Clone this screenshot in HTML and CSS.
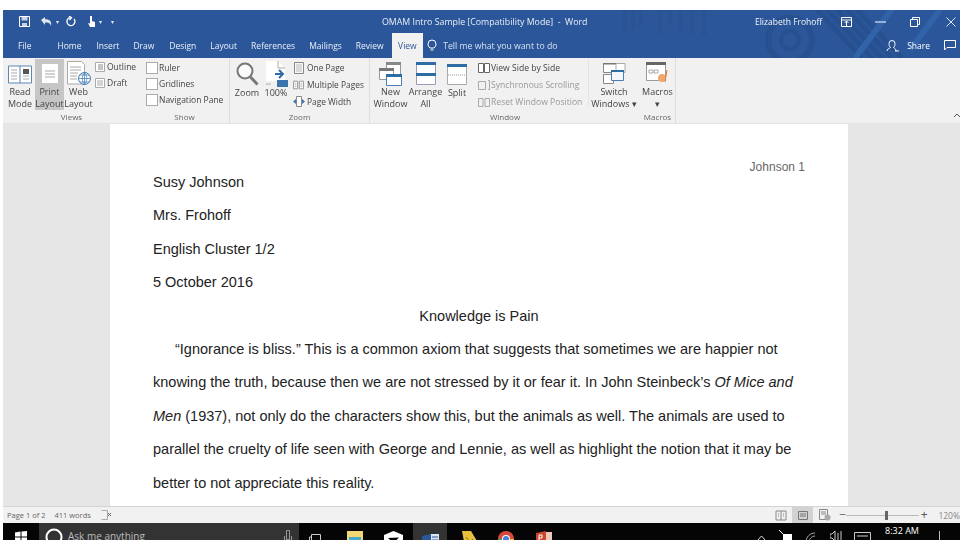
FILE: index.html
```html
<!DOCTYPE html>
<html lang="en">
<head>
<meta charset="utf-8">
<title>OMAM Intro Sample - Word</title>
<link rel="stylesheet" href="styles.css">
</head>
<body>
<div class="screen">
  <header class="chrome">
    <svg class="pattern" width="337" height="48" viewBox="0 0 337 48" fill="none" stroke="#295392">
      <path d="M5 0v24M13 0v20M21 0v16M40 0v24M50 0v14M61 0v20M72 0v24M84 0v26" stroke-width="4"/>
      <circle cx="170" cy="30" r="22" stroke="#26508f" stroke-width="6"/>
      <circle cx="170" cy="30" r="9" stroke="#26508f" stroke-width="4"/>
      <path d="M190 -8l52 56M200 -8l52 56M210 -8l52 56M220 -8l52 56M230 -8l52 56" stroke="#26508f" stroke-width="5"/>
      <path d="M275 -5l-40 53M320 0l-30 40" stroke="#3163a8" stroke-width="6"/>
    </svg>
    <div class="titlebar">
      <div class="qat">
        <svg width="11" height="11" viewBox="0 0 11 11"><path d="M.5.5h10v10H.5z" fill="none" stroke="#fff"/><path d="M2.5 .5h6v4h-6zM3 7h5v3.5H3z" fill="#fff" fill-opacity=".75"/></svg>
        <svg class="q-undo" width="13" height="11" viewBox="0 0 13 11"><path d="M1 4l4-3v2.2c4 0 7 1.300 6 6.800-1-3-3-3.400-6-3.400V9z" fill="#fff" fill-opacity=".85"/></svg>
        <span class="q-caret">▾</span>
        <svg class="q-redo" width="11" height="11" viewBox="0 0 11 11"><path d="M8 3a4 4 0 1 1-4-1.300M3 0l2.500 1.700L3.500 4" fill="none" stroke="#fff" stroke-width="1.300"/></svg>
        <svg class="q-touch" width="9" height="13" viewBox="0 0 9 13"><path d="M3 1h2v5l3 1v5H3L1 8l2 .5z" fill="#fff"/></svg>
        <span class="q-caret">▾</span>
        <span class="q-caret q-last">▾</span>
      </div>
      <div class="doc-title">OMAM Intro Sample [Compatibility Mode]&nbsp; - &nbsp;Word</div>
      <div class="user">Elizabeth Frohoff</div>
      <svg class="w-opt" width="11" height="10" viewBox="0 0 11 10"><path d="M.5.5h10v9H.5zM.5 3h10M5.500 9V4M3.500 6l2-2 2 2" fill="none" stroke="#fff"/></svg>
      <svg class="w-min" width="11" height="2" viewBox="0 0 11 2"><path d="M0 1h11" stroke="#fff"/></svg>
      <svg class="w-max" width="10" height="10" viewBox="0 0 10 10"><path d="M.5 2.500h7v7h-7zM2.500 2.500v-2h7v7h-2" fill="none" stroke="#fff"/></svg>
      <svg class="w-close" width="10" height="10" viewBox="0 0 10 10"><path d="M.5.5l9 9M9.500.5l-9 9" stroke="#dfe6f2"/></svg>
    </div>
    <nav class="tabs">
      <span class="tab t-file">File</span>
      <span class="tab t-home">Home</span>
      <span class="tab">Insert</span>
      <span class="tab t-draw">Draw</span>
      <span class="tab">Design</span>
      <span class="tab">Layout</span>
      <span class="tab">References</span>
      <span class="tab">Mailings</span>
      <span class="tab">Review</span>
      <span class="tab active">View</span>
      <svg class="bulb" width="10" height="13" viewBox="0 0 10 13"><path d="M3 9C1.500 7.500 1 6.500 1 5a4 4 0 0 1 8 0c0 1.500-.5 2.500-2 4zM3.500 11h3" fill="none" stroke="#fff"/></svg>
      <span class="tell">Tell me what you want to do</span>
      <svg class="share-ic" width="13" height="12" viewBox="0 0 13 12"><path d="M1 11c0-2 2-2.500 3.500-3.500C3 6 3 4.500 3 3.500a3 3 0 0 1 6 0c0 1 0 2.500-1.500 4C9 8.500 10 9 10 11M9 11h4" fill="none" stroke="#fff"/></svg>
      <span class="share">Share</span>
      <svg class="comment" width="12" height="11" viewBox="0 0 12 11"><path d="M.5.5h11v7H3L.5 10z" fill="none" stroke="#fff"/></svg>
    </nav>
  </header>

  <section class="ribbon">
    <div class="group g-views">
      <div class="group-body">
        <div class="big b-read"><div class="big-icon"><svg width="24" height="20" viewBox="0 0 24 20"><path d="M.5 2h23v17H.5z" fill="#fff" stroke="#5b87b5"/><path d="M12 2v17" stroke="#5b87b5"/><path d="M3 6h6M3 9h6M3 12h6M3 15h6M15 12h6M15 15h6" stroke="#aaa"/><path d="M15 5h6v5h-6z" fill="#555"/></svg></div><span>Read<br>Mode</span></div>
        <div class="big b-print selected"><div class="big-icon"><svg width="16" height="19" viewBox="0 0 16 19"><path d="M0 0h16v19H0z" fill="#fff"/><path d="M3 7h10M3 10h10M3 13h10" stroke="#aaa"/></svg></div><span>Print<br>Layout</span></div>
        <div class="big b-web"><div class="big-icon"><svg width="24" height="25" viewBox="0 0 24 25"><path d="M.5.5h14l3 3V23H.5z" fill="#fff" stroke="#aaa"/><path d="M3 6h11M3 9h11M3 12h8M3 15h7M3 18h7" stroke="#aaa"/><circle cx="17.500" cy="17.500" r="6" fill="#fff" stroke="#3b77b0"/><path d="M11.500 17.500h12M17.500 11.500v12M13 14h9M13 21h9M17.500 11.500c-3 3-3 9 0 12M17.500 11.500c3 3 3 9 0 12" fill="none" stroke="#3b77b0" stroke-width=".7"/></svg></div><span>Web<br>Layout</span></div>
        <div class="small-list l-views">
          <div class="row"><svg class="ic" width="10" height="10" viewBox="0 0 10 10"><path d="M.5.5h9v9h-9z" fill="#fff" stroke="#aaa"/><path d="M3 3h5M3 5h5M3 7h5" stroke="#888"/></svg>Outline</div>
          <div class="row"><svg class="ic" width="10" height="10" viewBox="0 0 10 10"><path d="M.5.5h9v9h-9z" fill="#fff" stroke="#aaa"/><path d="M2 3h6M2 5h6M2 7h6" stroke="#aaa"/></svg>Draft</div>
        </div>
      </div>
      <div class="group-label">Views</div>
    </div>

    <div class="group g-show sep">
      <div class="group-body">
        <div class="small-list l-show">
          <div class="row"><span class="check"></span>Ruler</div>
          <div class="row"><span class="check"></span>Gridlines</div>
          <div class="row"><span class="check"></span>Navigation Pane</div>
        </div>
      </div>
      <div class="group-label">Show</div>
    </div>

    <div class="group g-zoom sep">
      <div class="group-body">
        <div class="big b-zoom"><div class="big-icon"><svg width="23" height="24" viewBox="0 0 23 24"><circle cx="9" cy="9" r="7.500" fill="#fafafa" stroke="#777" stroke-width="2"/><path d="M14.500 15l7 7.500" stroke="#777" stroke-width="3"/></svg></div><span>Zoom</span></div>
        <div class="big b-100"><div class="big-icon"><svg width="23" height="27" viewBox="0 0 23 27"><path d="M1 0h12l7 7v13H1z" fill="#fff"/><path d="M13 0v7h7" fill="none" stroke="#aaa"/><path d="M10 13h7M14 9l4 4-4 4" fill="none" stroke="#2b6ca8" stroke-width="2"/><path d="M1 23h5" stroke="#aaa"/><path d="M12 19h11v7H12z" fill="#3c75ab"/></svg></div><span>100%</span></div>
        <div class="small-list l-zoom">
          <div class="row"><svg class="ic-z z-one" width="10" height="12" viewBox="0 0 10 12"><path d="M.5.5h9v11h-9z" fill="#f8f8f8" stroke="#888"/><path d="M2 3h6M2 5h6M2 7h6M2 9h6" stroke="#bbb"/></svg>One Page</div>
          <div class="row"><svg class="ic-z" width="11" height="10" viewBox="0 0 13 10"><path d="M.5.5h5v9h-5zM7.500.5h5v9h-5z" fill="#fff" stroke="#888"/><path d="M2 3h2M2 5h2M2 7h2M9 3h2M9 5h2M9 7h2" stroke="#aaa"/></svg>Multiple Pages</div>
          <div class="row"><svg class="ic-z ic-pw" width="12" height="11" viewBox="0 0 12 11"><path d="M3.500.5h5v10h-5z" fill="#fff" stroke="#888"/><path d="M3 3L0 5.500 3 8zM9 3l3 2.500L9 8z" fill="#3b77b0"/></svg>Page Width</div>
        </div>
      </div>
      <div class="group-label">Zoom</div>
    </div>

    <div class="group g-window">
      <div class="group-body">
        <div class="big b-new"><div class="big-icon"><svg width="23" height="24" viewBox="0 0 23 24"><path d="M7.500.5h14v13h-14z" fill="#fff" stroke="#999"/><path d="M7 0h15v3H7z" fill="#888"/><path d="M.5 6.500h14v11H.5z" fill="#fff" stroke="#999"/><path d="M0 6h15v3H0z" fill="#777"/><path d="M7.500 12.500h15v11h-15z" fill="#fff" stroke="#4a7fb5"/><path d="M7 12h16v3H7z" fill="#2e6da4"/></svg></div><span>New<br>Window</span></div>
        <div class="big b-arr"><div class="big-icon"><svg width="20" height="23" viewBox="0 0 20 23"><path d="M.5.500h19v22H.5z" fill="#fff" stroke="#99b"/><path d="M0 0h20v3H0zM0 11h20v3H0z" fill="#2e6da4"/></svg></div><span>Arrange<br>All</span></div>
        <div class="big b-split"><div class="big-icon"><svg width="20" height="21" viewBox="0 0 20 21"><path d="M.5.500h19v20H.5z" fill="#fff" stroke="#aaa"/><path d="M0 0h20v3H0z" fill="#2e6da4"/><path d="M1 11h18" stroke="#999" stroke-dasharray="1 1"/></svg></div><span>Split</span></div>
        <div class="small-list l-win">
          <div class="row"><svg class="ic-w" width="12" height="10" viewBox="0 0 12 10"><path d="M.5.500h5v9h-5zM6.500.500h5v9h-5z" fill="#fff" stroke="#666"/></svg>View Side by Side</div>
          <div class="row dim"><svg class="ic-w" width="12" height="10" viewBox="0 0 12 10"><path d="M.5 1.500h7v8h-7zM10 .5h1.500v9H10" fill="none" stroke="#aaa"/></svg>Synchronous Scrolling</div>
          <div class="row dim"><svg class="ic-w" width="12" height="10" viewBox="0 0 12 10"><path d="M.5 1.500h4.500v8H.5zM7 1.500h4.500v8H7z" fill="none" stroke="#aaa"/></svg>Reset Window Position</div>
        </div>
        <span class="vline"></span>
        <div class="big b-switch"><div class="big-icon"><svg width="23" height="21" viewBox="0 0 23 21"><path d="M.5.500h13v9H.5z" fill="#fff" stroke="#888"/><path d="M0 0h22v1.500H0z" fill="#777"/><path d="M13 .5h9v9h-9z" fill="#fff" stroke="#aaa"/><path d="M.5 11.500h10v9H.5z" fill="#fff" stroke="#888"/><path d="M8.500 7.500h12v10h-12z" fill="#f4f8fb" stroke="#4a7fb5"/><path d="M8 7h13v2H8z" fill="#2e6da4"/></svg></div><span>Switch<br>Windows ▾</span></div>
      </div>
      <div class="group-label">Window</div>
    </div>

    <div class="group g-macros sep">
      <div class="group-body">
        <div class="big b-mac"><div class="big-icon"><svg width="24" height="23" viewBox="0 0 24 23"><path d="M.5.500h19v18H.5z" fill="#fff" stroke="#999"/><path d="M0 0h20v3H0z" fill="#666"/><path d="M3 8h4v3H3zM8 8h4v3H8z" fill="none" stroke="#aaa"/><circle cx="16" cy="16" r="4" fill="#f1a76c"/><path d="M21 8l-2 12" stroke="#d57b2f"/></svg></div><span>Macros<br>▾</span></div>
      </div>
      <div class="group-label">Macros</div>
    </div>
    <svg class="collapse" width="6" height="4" viewBox="0 0 6 4"><path d="M0 4l3-3 3 3" fill="none" stroke="#555"/></svg>
  </section>

  <main class="docarea">
    <article class="page">
      <div class="runhead">Johnson 1</div>
      <p class="line">Susy Johnson</p>
      <p class="line">Mrs. Frohoff</p>
      <p class="line">English Cluster 1/2</p>
      <p class="line">5 October 2016</p>
      <p class="line center">Knowledge is Pain</p>
      <p class="line indent">“Ignorance is bliss.” This is a common axiom that suggests that sometimes we are happier not</p>
      <p class="line">knowing the truth, because then we are not stressed by it or fear it. In John Steinbeck’s <em>Of Mice and</em></p>
      <p class="line"><em>Men</em> (1937), not only do the characters show this, but the animals as well. The animals are used to</p>
      <p class="line">parallel the cruelty of life seen with George and Lennie, as well as highlight the notion that it may be</p>
      <p class="line">better to not appreciate this reality.</p>
    </article>
  </main>

  <footer class="status">
    <span class="st-a">Page 1 of 2</span>
    <span class="st-b">411 words</span>
    <svg class="st-ic" width="11" height="10" viewBox="0 0 11 10"><path d="M.5.500h6v9h-6" fill="none" stroke="#aaa"/><path d="M7 3l3 3M10 3L7 6" stroke="#666"/></svg>
    <svg class="vw-read" width="12" height="11" viewBox="0 0 12 11"><path d="M1 1h10v9H1zM6 1v9M3 4h1M3 6h1M8 4h1M8 6h1" fill="none" stroke="#888"/></svg>
    <span class="vw-print"><svg width="10" height="9" viewBox="0 0 10 9"><path d="M.5.500h9v8h-9zM2 3h6M2 5h6" fill="none" stroke="#777"/></svg></span>
    <svg class="vw-web" width="12" height="12" viewBox="0 0 12 12"><path d="M.5.500h8v10h-8zM2 3h5M2 5h5" fill="none" stroke="#888"/><circle cx="8.500" cy="8.500" r="3" fill="#aaa"/></svg>
    <span class="z-minus">−</span>
    <span class="slider"><span class="thumb"></span></span>
    <span class="z-plus">+</span>
    <span class="z-val">120%</span>
  </footer>

  <div class="taskbar">
    <span class="start"><svg width="12" height="12" viewBox="0 0 12 12"><path d="M0 1.500l5.500-1v5H0zM6.500.4L12 0v5.500H6.500zM0 6.500h5.500v5L0 10.500zM6.500 6.500H12V12l-5.500-.5z" fill="#fff"/></svg></span>
    <div class="search">
      <svg class="cortana" width="18" height="18" viewBox="0 0 18 18"><circle cx="9" cy="9" r="7.500" fill="none" stroke="#fff" stroke-width="2"/></svg>
      <span class="ask">Ask me anything</span>
      <svg class="mic" width="8" height="14" viewBox="0 0 8 14"><path d="M2.500.5h3v9h-3zM.5 6v5h7V6" fill="none" stroke="#999"/></svg>
    </div>
    <div class="apps">
      <svg class="a-task" width="12" height="14" viewBox="0 0 12 14"><path d="M2.500.5h9v13h-9zM2.500 3H.5v8h2" fill="none" stroke="#ccc"/></svg>
      <svg class="a-exp" width="16" height="16" viewBox="0 0 16 16"><path d="M0 0h16v16H0z" fill="#f2d774"/><path d="M2 6h12v10H2z" fill="#49a7c9"/></svg>
      <svg class="a-box" width="19" height="16" viewBox="0 0 19 16"><path d="M9.500 0L19 4v12H0V4z" fill="#fff"/><path d="M4 7l11-.5L9.500 12z" fill="#000"/></svg>
      <span class="a-word"><svg width="17" height="15" viewBox="0 0 17 15"><path d="M8 1h9v14H8z" fill="#dce6f3"/><path d="M0 3l9-2v14H0z" fill="#2b579a"/><path d="M10 4h6M10 7h6M10 10h6" stroke="#2b579a"/></svg></span>
      <svg class="a-note" width="16" height="16" viewBox="0 0 16 16"><path d="M1 0h9l6 10v6H4z" fill="#e7bf3f"/><path d="M5 6l4 5 3-3" stroke="#8a6a10" fill="none"/></svg>
      <svg class="a-chrome" width="16" height="16" viewBox="0 0 16 16"><circle cx="8" cy="8" r="8" fill="#d8483b"/><path d="M0 8a8 8 0 0 0 6 7.800L8 8z" fill="#3aa757"/><path d="M8 8l-2 7.800A8 8 0 0 0 16 8z" fill="#f3c129"/><circle cx="8" cy="8" r="4" fill="#fff"/><circle cx="8" cy="8" r="3" fill="#4a80d8"/></svg>
      <svg class="a-ppt" width="16" height="15" viewBox="0 0 16 15"><path d="M7 1h9v14H7z" fill="#eecabe"/><path d="M0 2l10-2v15H0z" fill="#c8472a"/><path d="M3 4v7M3 4h3v3H3" fill="none" stroke="#fff"/></svg>
    </div>
    <div class="tray">
      <svg class="t-up" width="9" height="6" viewBox="0 0 9 6"><path d="M.5 5.500l4-4.500 4 4.500" fill="none" stroke="#ddd"/></svg>
      <svg class="t-sync" width="13" height="14" viewBox="0 0 13 14"><path d="M4 4h9v10H4z" fill="#fff"/><path d="M0 0l5 5" stroke="#fff"/></svg>
      <svg class="t-wifi" width="11" height="11" viewBox="0 0 11 11"><path d="M1 10c0-5 4-9 9-9M4 10c0-3 3-6 6-6" fill="none" stroke="#aaa"/></svg>
      <svg class="t-vol" width="13" height="12" viewBox="0 0 13 12"><path d="M0 4h2l3-3v10L2 8H0zM8 3v7M11 1v10" fill="none" stroke="#ccc"/></svg>
      <svg class="t-key" width="17" height="12" viewBox="0 0 17 12"><path d="M.5.500h16v11H.5zM3 4h11" fill="none" stroke="#ccc"/></svg>
      <span class="clock">8:32 AM</span>
      <span class="t-bar"></span>
    </div>
  </div>
</div>
</body>
</html>
```
FILE: styles.css
```css
* { box-sizing: border-box; }
html, body { margin: 0; padding: 0; height: 540px; overflow: hidden; background: #fff; }
svg { display: block; flex: none; }
.screen { width: 960px; height: 540px; padding: 10px 0 0 3px; display: flex; flex-direction: column; overflow: hidden; font-family: "Open Sans", "Noto Sans", sans-serif; filter: blur(.35px); }

.chrome { position: relative; background: #2b579a; height: 48px; flex: none; overflow: hidden; color: #fff; }
.pattern { position: absolute; left: 617px; top: 0; }
.titlebar { position: relative; display: flex; align-items: center; height: 23px; font-size: 8.8px; }
.qat { display: flex; align-items: center; width: 379px; padding-left: 16px; }
.q-undo { margin-left: 10px; }
.q-caret { font-size: 6px; margin-left: 3px; opacity: .85; }
.q-redo { margin-left: 7px; }
.q-touch { margin-left: 10px; }
.q-last { margin-left: 9px; }
.doc-title { width: 373px; white-space: nowrap; color: #e8eef7; }
.user { width: 86px; white-space: nowrap; color: #f4f6fb; font-size: 8.5px; }
.w-min { margin-left: 23px; }
.w-max { margin-left: 24px; }
.w-close { margin-left: 26px; }
.tabs { position: relative; display: flex; align-items: flex-end; height: 25px; font-size: 8.5px; padding-left: 15px; }
.tab { height: 25px; line-height: 25px; margin-right: 14px; color: #eaf0f8; white-space: nowrap; }
.t-file { margin-right: 26px; }
.t-home { margin-right: 15px; }
.t-draw { margin-right: 15px; }
.tab.active { background: #f1f1f1; color: #2b579a; margin: 0 4px 0 -6px; padding: 0 6.5px; }
.bulb { align-self: center; }
.tell { align-self: center; margin-left: 6px; color: #d7e1f0; white-space: nowrap; width: 443px; font-size: 8.7px; }
.share-ic { align-self: center; }
.share { align-self: center; margin-left: 8px; width: 37px; }
.comment { align-self: center; }

.ribbon { position: relative; display: flex; height: 66px; flex: none; background: #f1f1f1; font-size: 9px; color: #444; border-bottom: 1px solid #e4e4e4; }
.group { display: flex; flex-direction: column; height: 65px; }
.sep { border-right: 1px solid #ddd; }
.g-views { width: 137px; }
.g-show { width: 90px; }
.g-zoom { width: 140px; }
.g-window { width: 270px; }
.g-macros { width: 36px; }
.group-body { display: flex; height: 53px; padding-top: 1px; }
.group-label { text-align: center; font-size: 8px; color: #666; line-height: 12px; }
.big { display: flex; flex-direction: column; align-items: center; text-align: center; height: 51px; line-height: 12px; white-space: nowrap; }
.big-icon { height: 28px; padding-top: 2px; display: flex; align-items: center; justify-content: center; }
.selected { background: #c6c6c6; }
.b-read { width: 28px; margin-left: 3px; }
.b-print { width: 29px; margin-left: 1px; }
.b-web { width: 29px; }
.small-list { display: flex; flex-direction: column; gap: 3px; white-space: nowrap; font-size: 8.5px; }
.row { display: flex; align-items: center; height: 13px; }
.l-views { margin-left: 2px; padding-top: 1px; gap: 3px; }
.ic { margin-right: 2px; }
.l-show { margin-left: 6px; padding-top: 2px; gap: 3px; }
.check { width: 12px; height: 12px; background: #fff; border: 1px solid #aaa; margin-right: 1px; }
.b-zoom { width: 30px; margin-left: 2px; }
.b-100 { width: 28px; }
.l-zoom { margin-left: 3px; padding-top: 2px; gap: 4px; font-size: 8.4px; }
.ic-z { margin-right: 3px; }
.z-one { margin-left: 1px; }
.ic-pw { margin-right: 2px; }
.b-new { width: 37px; margin-left: 2px; }
.b-arr { width: 33px; }
.b-split { width: 30px; }
.l-win { margin-left: 6px; padding-top: 2px; gap: 4px; width: 110px; font-size: 8.6px; }
.ic-w { margin-right: 1px; }
.dim { color: #999; }
.vline { width: 1px; height: 48px; background: #e2e2e2; }
.b-switch { width: 50px; }
.b-mac { width: 36px; }
.collapse { position: absolute; right: 0; bottom: 6px; }

.docarea { height: 382px; flex: none; background: #e6e6e6; padding-left: 107px; overflow: hidden; }
.page { width: 738px; height: 382px; background: #fff; padding-left: 43px; padding-top: 42px; font-family: "Liberation Sans", Arial, sans-serif; font-size: 14.5px; color: #222; position: relative; }
.runhead { position: absolute; top: 36px; right: 43px; font-size: 12px; color: #666; }
.line { margin: 0; height: 33.4px; line-height: 33.4px; white-space: nowrap; }
.center { text-align: center; width: 652px; }
.indent { padding-left: 22px; }

.status { display: flex; align-items: center; height: 17px; flex: none; background: #f1f1f1; border-top: 1px solid #d4d4d4; font-size: 7.5px; color: #666; overflow: hidden; }
.st-a { margin-left: 4px; width: 49px; white-space: nowrap; }
.st-b { width: 48px; white-space: nowrap; }
.vw-read { margin-left: 663px; }
.vw-print { display: flex; align-items: center; justify-content: center; width: 22px; height: 16px; background: #d2d2d2; margin-left: 5px; }
.vw-web { margin-left: 6px; }
.z-minus { margin-left: 8px; font-size: 12px; line-height: 14px; width: 7px; }
.slider { position: relative; width: 75px; height: 1px; background: #bbb; }
.thumb { position: absolute; left: 39px; top: -4px; width: 3px; height: 9px; background: #666; }
.z-plus { margin-left: 2px; font-size: 12px; line-height: 14px; color: #555; width: 14px; }
.z-val { margin-left: 4px; white-space: nowrap; color: #888; font-size: 8.5px; }

.taskbar { display: flex; height: 17px; flex: none; background: #050505; overflow: hidden; color: #fff; }
.start { width: 36px; padding: 8px 0 0 12px; }
.search { display: flex; width: 260px; background: #333; padding: 5px 0 0 6px; }
.ask { font-size: 10px; line-height: 16px; margin-left: 5px; color: #bbb; width: 216px; white-space: nowrap; }
.mic { margin-top: 2px; }
.apps { display: flex; align-items: flex-start; width: 441px; padding-top: 8px; }
.a-task { margin-left: 10px; margin-top: 3px; }
.a-exp { margin-left: 26px; }
.a-box { margin-left: 21px; }
.a-word { display: flex; justify-content: center; width: 34px; height: 20px; margin: -8px 0 0 10px; padding-top: 10px; background: #333; }
.a-note { margin-left: 14px; }
.a-chrome { margin-left: 21px; }
.a-ppt { margin-left: 22px; }
.tray { display: flex; align-items: flex-start; }
.t-up { margin: 12px 0 0 17px; }
.t-sync { margin: 7px 0 0 13px; }
.t-wifi { margin: 9px 0 0 13px; }
.t-vol { margin: 7px 0 0 14px; }
.t-key { margin: 9px 0 0 11px; }
.clock { font-size: 9px; line-height: 16px; margin-left: 14px; white-space: nowrap; }
.t-bar { width: 1px; height: 10px; background: #bbb; margin: 8px 0 0 20px; }
```
